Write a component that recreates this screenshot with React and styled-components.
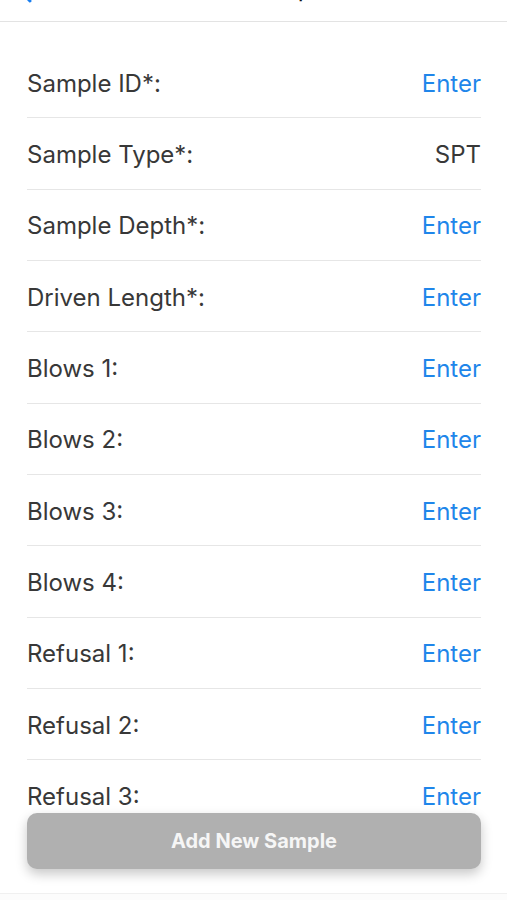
import React from 'react';
import styled, { createGlobalStyle } from 'styled-components';

const GlobalStyle = createGlobalStyle`
  html, body {
    margin: 0;
    padding: 0;
    background: #fff;
    height: 900px;
    overflow: hidden;
  }
  body {
    font-family: Inter, "Liberation Sans", sans-serif;
    -webkit-font-smoothing: antialiased;
  }
`;

const Screen = styled.div`
  position: relative;
  width: 507px;
  height: 900px;
  overflow: hidden;
  background: #fff;
`;

const NavBar = styled.header`
  height: 44px;
  margin-top: -22px;
  display: grid;
  grid-template-columns: 1fr auto 1fr;
  align-items: end;
  padding: 0 20px;
  border-bottom: 1px solid #e3e3e3;
  box-sizing: border-box;
`;

const BackButton = styled.span`
  color: #1a7ff0;
  display: flex;
  align-items: flex-end;
  height: 44px;
  svg {
    margin-bottom: 19px;
  }
`;

const Title = styled.h1`
  margin: 0 0 21px;
  font-size: 17px;
  font-weight: 600;
  color: #111;
  line-height: 1;
`;

const List = styled.div`
  padding: 25px 26px 120px 27px;
`;

const Row = styled.div`
  height: 71.33px;
  box-sizing: border-box;
  display: flex;
  align-items: center;
  justify-content: space-between;
  border-bottom: 1px solid #e6e6e6;
  font-size: 24px;
  padding-top: 2px;
`;

const Label = styled.span`
  color: #383838;
`;

const Value = styled.span`
  color: ${({ $action }) => ($action ? '#1f86ea' : '#383838')};
`;

const AddButton = styled.button`
  position: absolute;
  left: 27px;
  right: 26px;
  bottom: 31px;
  height: 56px;
  border: none;
  border-radius: 10px;
  background: #b0b0b0;
  color: #f6f6f6;
  font-family: Inter, "Liberation Sans", sans-serif;
  font-size: 20px;
  font-weight: 700;
  box-shadow: 0 5px 12px rgba(0, 0, 0, 0.22);
`;

const HomeStrip = styled.div`
  position: absolute;
  left: 0;
  right: 0;
  bottom: 0;
  height: 6px;
  background: #fcfcfc;
  border-top: 1px solid #f0f0f0;
`;

const fields = [
  ['Sample ID*:', 'Enter'],
  ['Sample Type*:', 'SPT'],
  ['Sample Depth*:', 'Enter'],
  ['Driven Length*:', 'Enter'],
  ['Blows 1:', 'Enter'],
  ['Blows 2:', 'Enter'],
  ['Blows 3:', 'Enter'],
  ['Blows 4:', 'Enter'],
  ['Refusal 1:', 'Enter'],
  ['Refusal 2:', 'Enter'],
  ['Refusal 3:', 'Enter'],
];

const App = () => (
  <Screen>
    <GlobalStyle />
    <NavBar>
      <BackButton>
        <svg width="12" height="20" viewBox="0 0 12 20" fill="none">
          <path d="M10 2 L2.5 10 L10 18" stroke="currentColor" strokeWidth="3" strokeLinecap="round" strokeLinejoin="round" />
        </svg>
      </BackButton>
      <Title>Add New Sample</Title>
      <span />
    </NavBar>
    <List>
      {fields.map(([label, value]) => (
        <Row key={label}>
          <Label>{label}</Label>
          <Value $action={value === 'Enter'}>{value}</Value>
        </Row>
      ))}
    </List>
    <AddButton>Add New Sample</AddButton>
    <HomeStrip />
  </Screen>
);

export default App;
